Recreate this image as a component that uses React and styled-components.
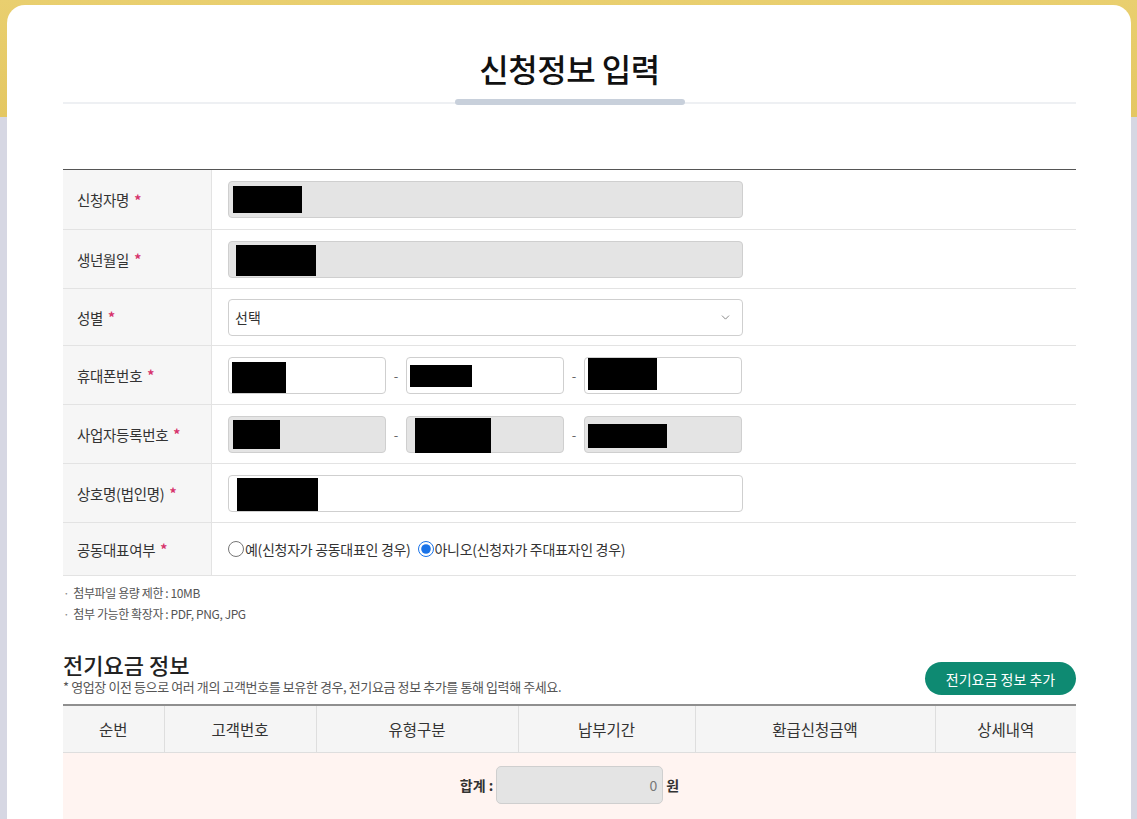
import React from 'react'
import styled, { createGlobalStyle } from 'styled-components'
import { ChevronDown } from 'lucide-react'

const GlobalStyle = createGlobalStyle`
  html, body {
    margin: 0;
    padding: 0;
  }
  body {
    font-family: "Noto Sans CJK KR", "Noto Sans", sans-serif;
    color: #333;
    background: linear-gradient(180deg, #e9cf6f 0, #e4c762 117px, #d6d7e3 117px, #d6d7e3 100%);
    min-height: 819px;
    overflow: hidden;
  }
`

const Page = styled.div`
  padding: 5px 6px 0 7px;
`

const Card = styled.div`
  background: #fff;
  border-radius: 18px 18px 0 0;
  padding: 41px 55px 40px 56px;
  min-height: 780px;
`

const TitleWrap = styled.div`
  position: relative;
  text-align: center;
  border-bottom: 2px solid #eef0f3;
  padding-bottom: 12px;

  &::after {
    content: '';
    position: absolute;
    left: 50%;
    bottom: -3px;
    width: 230px;
    height: 6px;
    margin-left: -115px;
    border-radius: 3px;
    background: #c8d0db;
  }
`

const Title = styled.h1`
  margin: 0;
  font-size: 32px;
  line-height: 44px;
  font-weight: 500;
  color: #111;
  letter-spacing: -0.5px;
`

const FormTable = styled.div`
  margin-top: 65px;
  border-top: 1px solid #555;
`

const Row = styled.div`
  display: grid;
  grid-template-columns: 149px 1fr;
  height: ${p => p.$h || 58}px;
  border-bottom: 1px solid #e3e3e3;
`

const Label = styled.div`
  display: flex;
  align-items: center;
  padding-left: 14px;
  background: #f6f6f6;
  border-right: 1px solid #e3e3e3;
  font-size: 14.5px;
  color: #333;
  letter-spacing: -0.3px;
`

const Star = styled.span`
  color: #d6336c;
  margin-left: 5px;
  font-size: 14px;
  font-weight: 700;
`

const Cell = styled.div`
  display: flex;
  align-items: center;
  padding-left: 16px;
`

const Input = styled.div`
  box-sizing: border-box;
  width: ${p => p.$w || 515}px;
  height: 37px;
  border: 1px solid #cfcfcf;
  border-radius: 4px;
  background: ${p => (p.$disabled ? '#e4e4e4' : '#fff')};
  display: flex;
  align-items: center;
  padding-left: ${p => p.$pl || 3}px;
  font-size: 14px;
  color: #333;
`

const Redact = styled.span`
  display: block;
  width: ${p => p.$w}px;
  height: ${p => p.$h}px;
  background: #000;
  margin-top: ${p => p.$mt || 0}px;
`

const Dash = styled.span`
  width: 20px;
  text-align: center;
  font-size: 13px;
  color: #666;
`

const Select = styled(Input)`
  justify-content: space-between;
  padding: 0 10px 0 6px;
`

const RadioGroup = styled.div`
  display: flex;
  align-items: center;
  font-size: 14px;
  color: #333;
  letter-spacing: -0.3px;
`

const RadioLabel = styled.label`
  display: flex;
  align-items: center;
  margin-right: 7px;
`

const Radio = styled.input`
  width: 16px;
  height: 16px;
  margin: 0 1px 0 0;
  accent-color: #1a73e8;
`

const Notes = styled.ul`
  list-style: none;
  margin: 6px 0 0;
  padding: 0;
`

const Note = styled.li`
  font-size: 12px;
  line-height: 21px;
  color: #555;
  letter-spacing: -0.4px;

  &::before {
    content: '·';
    margin-right: 4px;
    color: #888;
  }
`

const SectionHead = styled.div`
  display: flex;
  justify-content: space-between;
  align-items: flex-end;
  margin-top: 26px;
`

const SectionTitle = styled.h2`
  margin: 0;
  font-size: 22px;
  line-height: 28px;
  font-weight: 500;
  color: #222;
`

const SectionDesc = styled.p`
  margin: 0;
  font-size: 13px;
  line-height: 17px;
  color: #555;
  letter-spacing: -0.4px;
`

const GreenButton = styled.button`
  width: 151px;
  height: 33px;
  border: none;
  border-radius: 17px;
  background: #0e8a72;
  color: #fff;
  font-family: inherit;
  font-size: 14px;
  cursor: pointer;
`

const Table = styled.table`
  width: 100%;
  margin-top: 9px;
  border-collapse: collapse;
  border-top: 2px solid #8f8f8f;
`

const Th = styled.th`
  height: 46px;
  padding: 0;
  background: #f5f5f5;
  font-weight: 400;
  font-size: 15.5px;
  color: #333;
  border-left: 1px solid #dedede;
  border-bottom: 1px solid #dedede;
  &:first-child {
    border-left: none;
  }
`

const SumCell = styled.td`
  height: 70px;
  padding: 13px 0 0;
  vertical-align: top;
  background: #fff4f1;
`

const SumWrap = styled.div`
  display: flex;
  align-items: center;
  justify-content: center;
  gap: 3px;
  font-size: 14px;
  font-weight: 700;
  color: #333;
`

const SumInput = styled.div`
  box-sizing: border-box;
  width: 167px;
  height: 38px;
  border: 1px solid #cfcfcf;
  border-radius: 5px;
  background: #e4e4e4;
  display: flex;
  align-items: center;
  justify-content: flex-end;
  padding-right: 5px;
  font-weight: 400;
  color: #777;
`

const columns = [
  { title: '순번', w: 101 },
  { title: '고객번호', w: 152 },
  { title: '유형구분', w: 202 },
  { title: '납부기간', w: 177 },
  { title: '환급신청금액', w: 240 },
  { title: '상세내역', w: 141 }
]

export default function App () {
  return (
    <Page>
      <GlobalStyle />
      <Card>
        <TitleWrap>
          <Title>신청정보 입력</Title>
        </TitleWrap>

        <FormTable>
          <Row $h={59}>
            <Label>신청자명<Star>*</Star></Label>
            <Cell>
              <Input $disabled $pl={4}><Redact $w={69} $h={27} /></Input>
            </Cell>
          </Row>
          <Row>
            <Label>생년월일<Star>*</Star></Label>
            <Cell>
              <Input $disabled $pl={7}><Redact $w={80} $h={31} $mt={2} /></Input>
            </Cell>
          </Row>
          <Row $h={56}>
            <Label>성별<Star>*</Star></Label>
            <Cell>
              <Select>
                <span>선택</span>
                <ChevronDown size={13} color='#777' strokeWidth={1.6} />
              </Select>
            </Cell>
          </Row>
          <Row>
            <Label>휴대폰번호<Star>*</Star></Label>
            <Cell>
              <Input $w={158}><Redact $w={54} $h={31} $mt={4} /></Input>
              <Dash>-</Dash>
              <Input $w={158}><Redact $w={62} $h={22} $mt={2} /></Input>
              <Dash>-</Dash>
              <Input $w={158}><Redact $w={69} $h={32} $mt={-2} /></Input>
            </Cell>
          </Row>
          <Row>
            <Label>사업자등록번호<Star>*</Star></Label>
            <Cell>
              <Input $w={158} $disabled $pl={4}><Redact $w={47} $h={29} /></Input>
              <Dash>-</Dash>
              <Input $w={158} $disabled $pl={8}><Redact $w={76} $h={35} $mt={2} /></Input>
              <Dash>-</Dash>
              <Input $w={158} $disabled><Redact $w={79} $h={24} $mt={4} /></Input>
            </Cell>
          </Row>
          <Row>
            <Label>상호명(법인명)<Star>*</Star></Label>
            <Cell>
              <Input $pl={8}><Redact $w={81} $h={33} $mt={3} /></Input>
            </Cell>
          </Row>
          <Row $h={52}>
            <Label>공동대표여부<Star>*</Star></Label>
            <Cell>
              <RadioGroup>
                <RadioLabel>
                  <Radio type='radio' name='joint' />
                  예(신청자가 공동대표인 경우)
                </RadioLabel>
                <RadioLabel>
                  <Radio type='radio' name='joint' defaultChecked />
                  아니오(신청자가 주대표자인 경우)
                </RadioLabel>
              </RadioGroup>
            </Cell>
          </Row>
        </FormTable>

        <Notes>
          <Note>첨부파일 용량 제한 : 10MB</Note>
          <Note>첨부 가능한 확장자 : PDF, PNG, JPG</Note>
        </Notes>

        <SectionHead>
          <div>
            <SectionTitle>전기요금 정보</SectionTitle>
            <SectionDesc>* 영업장 이전 등으로 여러 개의 고객번호를 보유한 경우, 전기요금 정보 추가를 통해 입력해 주세요.</SectionDesc>
          </div>
          <GreenButton>전기요금 정보 추가</GreenButton>
        </SectionHead>

        <Table>
          <colgroup>
            {columns.map(c => <col key={c.title} style={{ width: c.w }} />)}
          </colgroup>
          <thead>
            <tr>
              {columns.map(c => <Th key={c.title}>{c.title}</Th>)}
            </tr>
          </thead>
          <tbody>
            <tr>
              <SumCell colSpan={6}>
                <SumWrap>
                  <span>합계 :</span>
                  <SumInput>0</SumInput>
                  <span>원</span>
                </SumWrap>
              </SumCell>
            </tr>
          </tbody>
        </Table>
      </Card>
    </Page>
  )
}
